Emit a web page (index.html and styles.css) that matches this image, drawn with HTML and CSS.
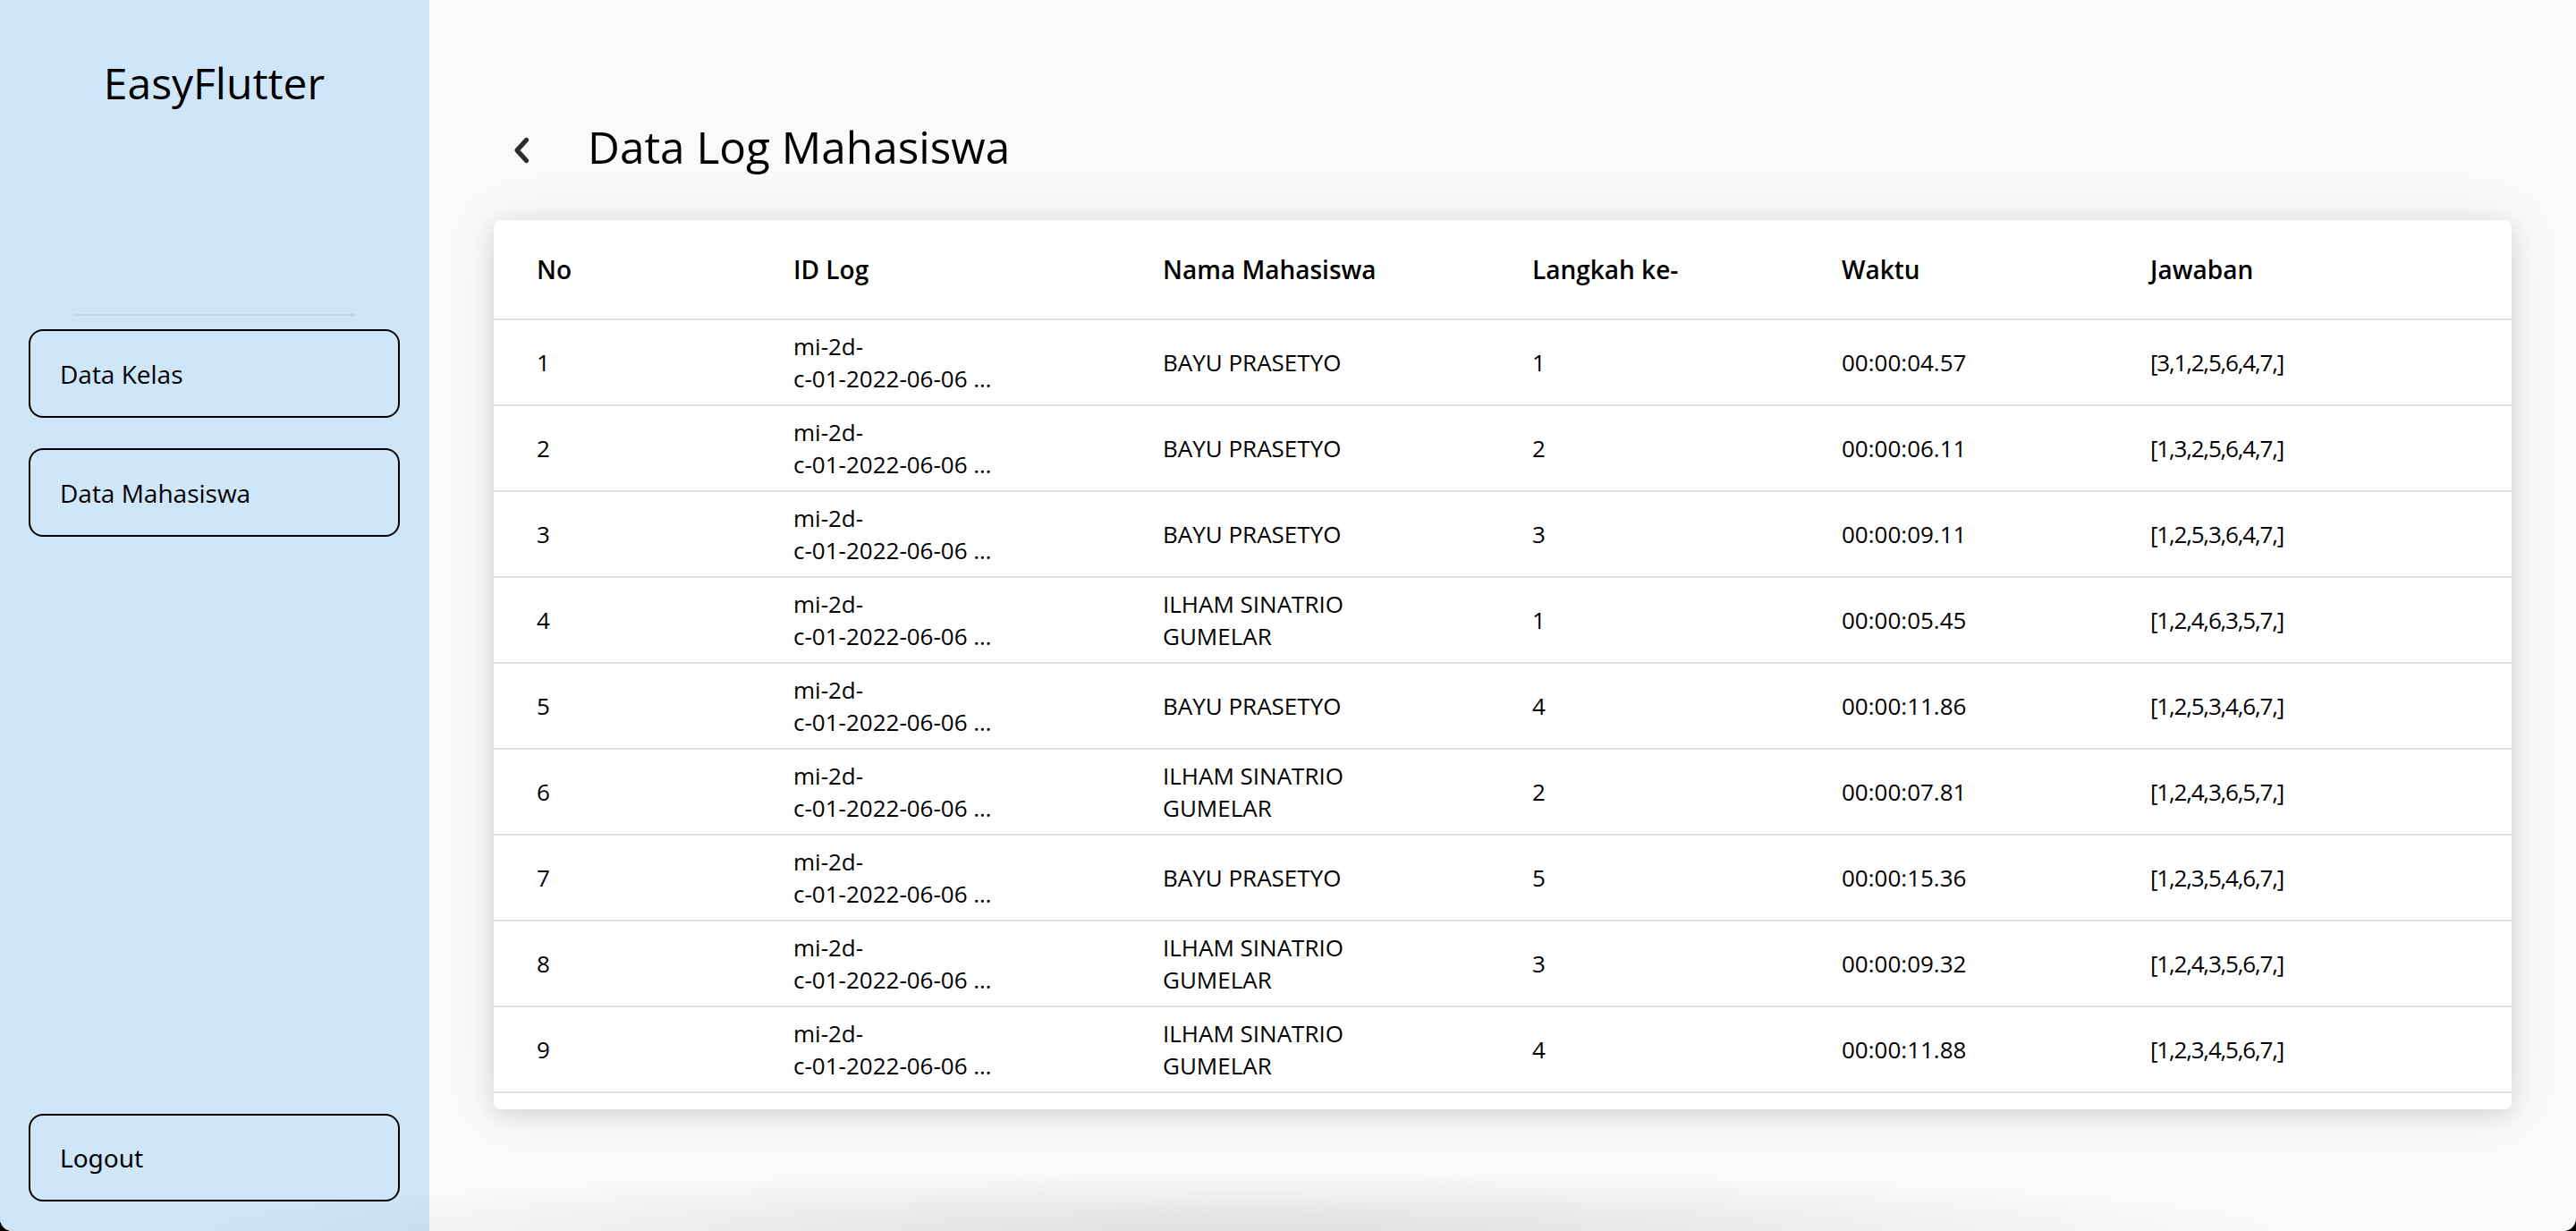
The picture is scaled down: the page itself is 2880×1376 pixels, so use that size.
FILE: index.html
```html
<!DOCTYPE html>
<html lang="id">
<head>
<meta charset="utf-8">
<title>EasyFlutter - Data Log Mahasiswa</title>
<link rel="stylesheet" href="styles.css">
</head>
<body>
<div class="app">
  <aside class="sidebar">
    <div class="brand">EasyFlutter</div>
    <div class="divider"></div>
    <nav class="nav">
      <button class="nav-btn">Data Kelas</button>
      <button class="nav-btn">Data Mahasiswa</button>
    </nav>
    <button class="nav-btn logout">Logout</button>
  </aside>
  <main class="main">
    <header class="page-head">
      <svg class="back" viewBox="0 0 20 32" width="20" height="32"><polyline points="15.5,4.5 5,16 15.5,27.5"/></svg>
      <h1 class="page-title">Data Log Mahasiswa</h1>
    </header>
    <section class="card">
      <div class="row head">
        <div>No</div><div>ID Log</div><div>Nama Mahasiswa</div><div>Langkah ke-</div><div>Waktu</div><div>Jawaban</div>
      </div>
      <div class="row"><div>1</div><div class="two"><span>mi-2d-</span><span>c-01-2022-06-06 …</span></div><div>BAYU PRASETYO</div><div>1</div><div>00:00:04.57</div><div class="ans">[3,1,2,5,6,4,7,]</div></div>
      <div class="row"><div>2</div><div class="two"><span>mi-2d-</span><span>c-01-2022-06-06 …</span></div><div>BAYU PRASETYO</div><div>2</div><div>00:00:06.11</div><div class="ans">[1,3,2,5,6,4,7,]</div></div>
      <div class="row"><div>3</div><div class="two"><span>mi-2d-</span><span>c-01-2022-06-06 …</span></div><div>BAYU PRASETYO</div><div>3</div><div>00:00:09.11</div><div class="ans">[1,2,5,3,6,4,7,]</div></div>
      <div class="row"><div>4</div><div class="two"><span>mi-2d-</span><span>c-01-2022-06-06 …</span></div><div class="two"><span>ILHAM SINATRIO</span><span>GUMELAR</span></div><div>1</div><div>00:00:05.45</div><div class="ans">[1,2,4,6,3,5,7,]</div></div>
      <div class="row"><div>5</div><div class="two"><span>mi-2d-</span><span>c-01-2022-06-06 …</span></div><div>BAYU PRASETYO</div><div>4</div><div>00:00:11.86</div><div class="ans">[1,2,5,3,4,6,7,]</div></div>
      <div class="row"><div>6</div><div class="two"><span>mi-2d-</span><span>c-01-2022-06-06 …</span></div><div class="two"><span>ILHAM SINATRIO</span><span>GUMELAR</span></div><div>2</div><div>00:00:07.81</div><div class="ans">[1,2,4,3,6,5,7,]</div></div>
      <div class="row"><div>7</div><div class="two"><span>mi-2d-</span><span>c-01-2022-06-06 …</span></div><div>BAYU PRASETYO</div><div>5</div><div>00:00:15.36</div><div class="ans">[1,2,3,5,4,6,7,]</div></div>
      <div class="row"><div>8</div><div class="two"><span>mi-2d-</span><span>c-01-2022-06-06 …</span></div><div class="two"><span>ILHAM SINATRIO</span><span>GUMELAR</span></div><div>3</div><div>00:00:09.32</div><div class="ans">[1,2,4,3,5,6,7,]</div></div>
      <div class="row"><div>9</div><div class="two"><span>mi-2d-</span><span>c-01-2022-06-06 …</span></div><div class="two"><span>ILHAM SINATRIO</span><span>GUMELAR</span></div><div>4</div><div>00:00:11.88</div><div class="ans">[1,2,3,4,5,6,7,]</div></div>
    </section>
  </main>
  <div class="bottom-shade"></div>
</div>
</body>
</html>
```

FILE: styles.css
```css
html, body {
  margin: 0;
  padding: 0;
  width: 2880px;
  height: 1376px;
  overflow: hidden;
  background: #000;
}

.app {
  position: relative;
  display: flex;
  width: 2880px;
  height: 1376px;
  overflow: hidden;
  border-radius: 0 0 14px 14px;
  background: #fafafa;
  font-family: "Open Sans", "Noto Sans", sans-serif;
  color: #000;
}

/* Sidebar */
.sidebar {
  width: 480px;
  flex: 0 0 480px;
  height: 1376px;
  box-sizing: border-box;
  background: #cfe5f8;
  display: flex;
  flex-direction: column;
  padding: 0 33px 33px 32px;
}

.brand {
  margin-top: 61px;
  height: 64px;
  line-height: 64px;
  font-size: 48px;
  font-weight: 400;
  text-align: center;
}

.divider {
  margin: 226px 51px 0 51px;
  height: 2px;
  background: #bfd5ea;
}

.nav {
  display: flex;
  flex-direction: column;
  gap: 34px;
  margin-top: 15px;
}

.nav-btn {
  display: flex;
  align-items: center;
  box-sizing: border-box;
  width: 415px;
  height: 99px;
  padding: 0 0 0 33px;
  border: 2px solid #000;
  border-radius: 16px;
  background: transparent;
  font-family: "Open Sans", "Noto Sans", sans-serif;
  font-size: 28px;
  color: #000;
  text-align: left;
}

.logout {
  margin-top: auto;
  height: 98px;
  font-family: "Noto Sans", "Open Sans", sans-serif;
}

/* Main */
.main {
  flex: 1;
  box-sizing: border-box;
  padding: 119px 72px 0 72px;
  display: flex;
  flex-direction: column;
}

.page-head {
  height: 90px;
  display: flex;
  align-items: center;
  padding-left: 21px;
  gap: 64px;
}

.back {
  flex: 0 0 20px;
  margin-top: 8px;
  fill: none;
  stroke: #2b2b2b;
  stroke-width: 5.2;
  stroke-linecap: round;
  stroke-linejoin: round;
}

.page-title {
  margin: 0;
  font-size: 49.5px;
  line-height: 64px;
  font-weight: 400;
}

.card {
  margin-top: 37px;
  height: 994px;
  background: #fff;
  border-radius: 8px;
  overflow: hidden;
  box-shadow: 0 6px 24px rgba(0, 0, 0, 0.12), 0 0 70px rgba(0, 0, 0, 0.07);
}

.row {
  display: grid;
  grid-template-columns: 287px 413px 413px 346px 345px 1fr;
  align-items: center;
  padding-left: 48px;
  height: 94px;
  border-bottom: 2px solid #e0e0e0;
  font-size: 26px;
  line-height: 36px;
}

.row.head {
  height: 110px;
  font-size: 28px;
  font-weight: 600;
  line-height: 38px;
}

.two span {
  display: block;
  white-space: nowrap;
}

.ans {
  letter-spacing: -1.2px;
}

.bottom-shade {
  position: absolute;
  left: 200px;
  right: 300px;
  bottom: 0;
  height: 70px;
  background: radial-gradient(ellipse 50% 100% at 50% 100%, rgba(0, 0, 0, 0.11), rgba(0, 0, 0, 0) 100%);
  pointer-events: none;
}
```
